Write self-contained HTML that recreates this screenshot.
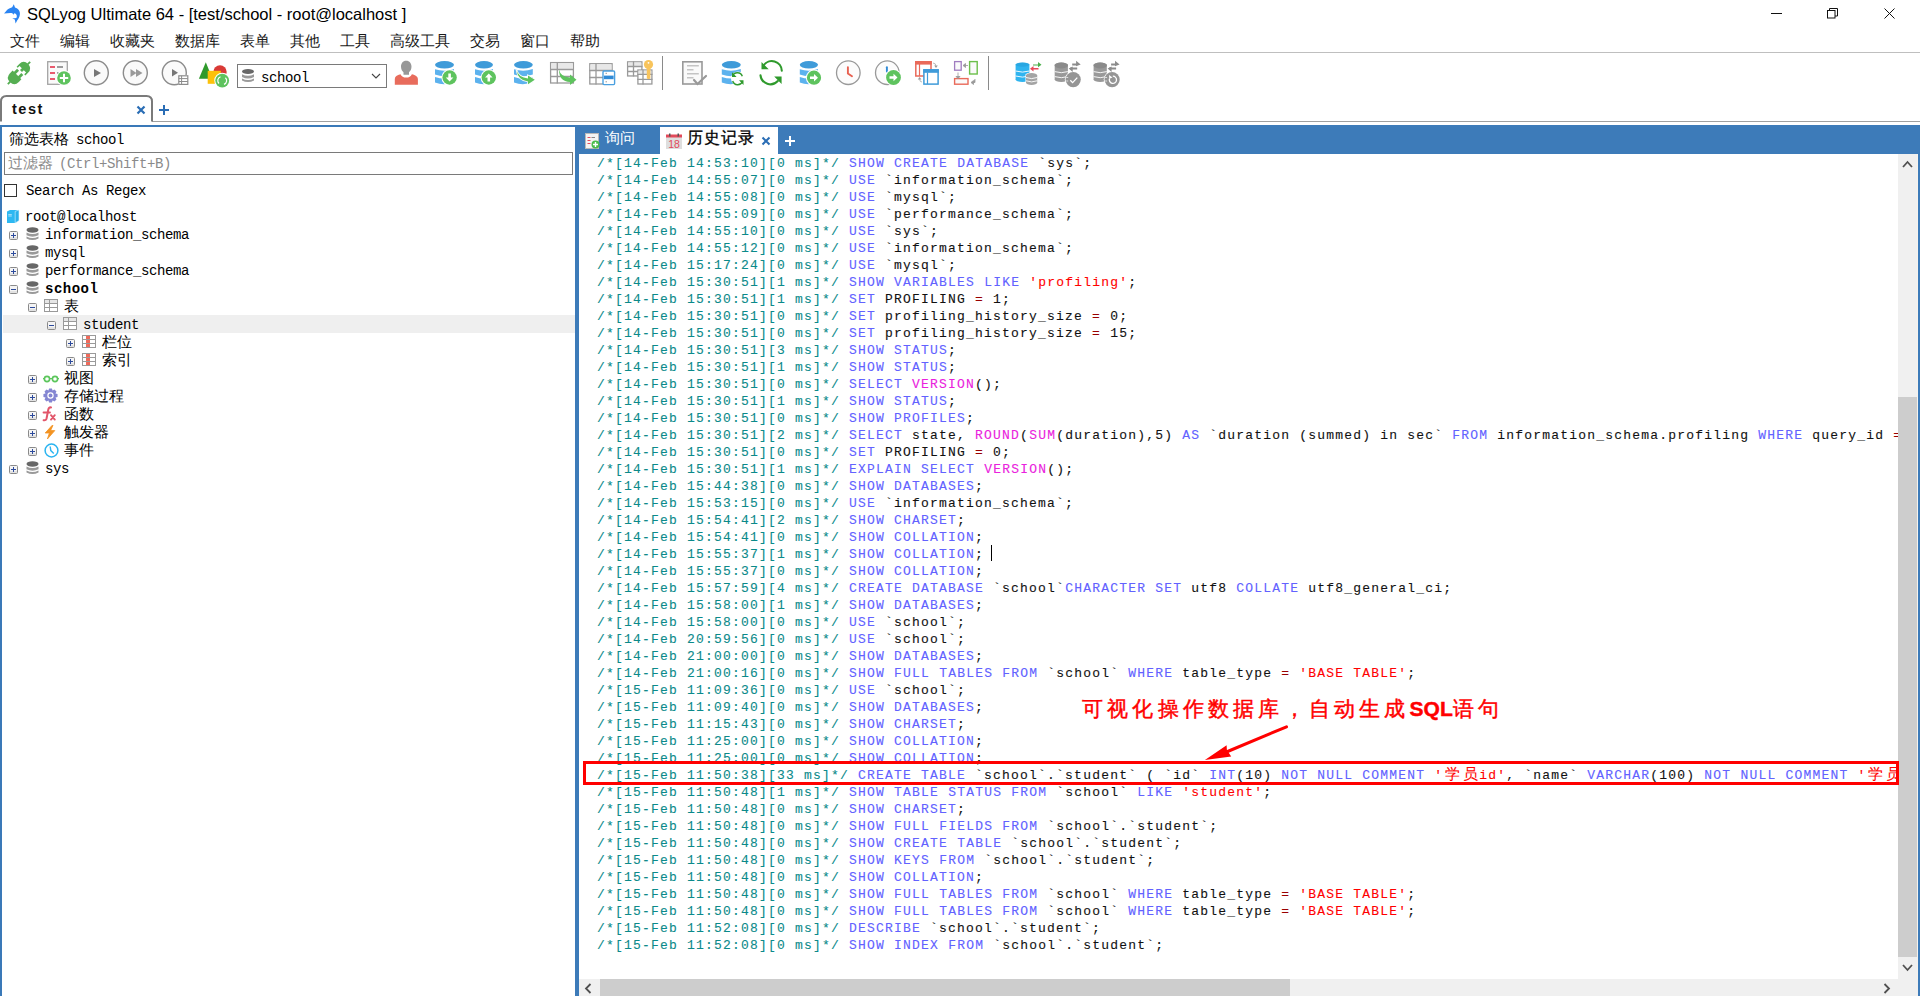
<!DOCTYPE html>
<html><head><meta charset="utf-8"><style>
*{margin:0;padding:0;box-sizing:border-box}
html,body{width:1920px;height:996px;overflow:hidden;background:#fff;font-family:"Liberation Sans",sans-serif;color:#000}
.a{position:absolute}
#title{position:absolute;left:27px;top:3px;font-size:16.5px;line-height:22px;white-space:pre;color:#000}
.mi{position:absolute;top:31px;font-size:15px;line-height:20px;color:#1a1a1a}
#code{position:absolute;left:597px;top:154px;font-family:"Liberation Mono",monospace;font-size:13px;letter-spacing:1.2px;line-height:17px;white-space:pre;color:#111;-webkit-text-stroke:0.1px}
#code b{font-weight:normal}
#code .c{color:#0b8a8a}
#code .k{color:#6262ff}
#code .f{color:#ea22dd}
#code .s{color:#f00}
#code .o{color:#900}
#code i.w{font-style:normal;display:inline-block;width:18px;text-align:center;font-size:15px;letter-spacing:0;line-height:10px}
.mono{font-family:"Liberation Mono",monospace}
.tt{position:absolute;font-family:"Liberation Mono",monospace;font-size:14px;line-height:18px;letter-spacing:-0.4px;white-space:pre;color:#000}
.tcj{position:absolute;font-size:15px;line-height:20px;white-space:pre;color:#000}
.tm{font-family:"Liberation Mono",monospace;font-size:14px;letter-spacing:-0.4px}
</style></head><body>
<!-- title bar -->
<div id="title">SQLyog Ultimate 64 - [test/school - root@localhost ]</div>
<span class="mi" style="left:10px">文件</span><span class="mi" style="left:60px">编辑</span><span class="mi" style="left:110px">收藏夹</span><span class="mi" style="left:175px">数据库</span><span class="mi" style="left:240px">表单</span><span class="mi" style="left:290px">其他</span><span class="mi" style="left:340px">工具</span><span class="mi" style="left:390px">高级工具</span><span class="mi" style="left:470px">交易</span><span class="mi" style="left:520px">窗口</span><span class="mi" style="left:570px">帮助</span>
<div class="a" style="left:0;top:52px;width:1920px;height:1px;background:#bfbfbf"></div>
<svg class="a" style="left:3px;top:57px" width="32" height="32" viewBox="3 57 32 32"><g transform="rotate(45 19 73)" fill="#55ae52"><path d="M12.8 75.8 H25.2 V79.5 Q25.2 85.8 19 85.8 Q12.8 85.8 12.8 79.5Z"/><rect x="14.6" y="71.3" width="2.8" height="5"/><rect x="20.6" y="71.3" width="2.8" height="5"/><rect x="18.1" y="85" width="1.8" height="3.8"/><path d="M12.8 70.2 H14.4 V67.6 H17.6 V70.2 H20.4 V67.6 H23.6 V70.2 H25.2 V66.4 Q25.2 60.2 19 60.2 Q12.8 60.2 12.8 66.4Z"/><rect x="18.1" y="57.2" width="1.8" height="3.6"/></g></svg>
<svg class="a" style="left:45px;top:59px" width="28" height="28" viewBox="45 59 28 28"><rect x="47.7" y="61.7" width="19.6" height="22.6" fill="#fafafa" stroke="#a4a4a4" stroke-width="1.3"/><path d="M50 67H55M50 73H55M50 79H55" stroke="#e85a6e" stroke-width="2"/><path d="M57 67H63M57 73H62" stroke="#9c9c9c" stroke-width="2"/><circle cx="64" cy="78" r="7.8" fill="#fff"/><circle cx="64" cy="78" r="6.8" fill="#5ec35e"/><path d="M64 73.8 V82.2 M59.8 78 H68.2" stroke="#fff" stroke-width="2"/></svg>
<svg class="a" style="left:81px;top:58px" width="32" height="32" viewBox="81 58 32 32"><circle cx="96.3" cy="72.7" r="12" fill="#fafafa" stroke="#8c8c8c" stroke-width="1.4"/><path d="M94 69 L101 73 L94 77Z" fill="#777"/></svg>
<svg class="a" style="left:120px;top:58px" width="32" height="32" viewBox="120 58 32 32"><circle cx="135.3" cy="72.7" r="12" fill="#fafafa" stroke="#8c8c8c" stroke-width="1.4"/><path d="M130.5 69 L136.5 73 L130.5 77Z M136 69 L142.5 73 L136 77Z" fill="#9a9a9a"/></svg>
<svg class="a" style="left:159px;top:58px" width="32" height="32" viewBox="159 58 32 32"><circle cx="174.3" cy="72.7" r="12" fill="#fafafa" stroke="#8c8c8c" stroke-width="1.4"/><path d="M172 69 L178 72.8 L172 76.5Z" fill="#777"/><rect x="178" y="75" width="10.5" height="10" fill="#fff"/><rect x="178.8" y="75.8" width="9" height="8.6" fill="#fff" stroke="#8c8c8c" stroke-width="1.2"/><path d="M181.6 75.8V84.4M178.8 78.6H187.8M178.8 81.5H187.8" stroke="#8c8c8c" stroke-width="1"/></svg>
<svg class="a" style="left:197px;top:59px" width="34" height="30" viewBox="197 59 34 30"><path d="M205.8 62.3 L212.5 78.8 H198.9Z" fill="#2f9a2c"/><circle cx="220" cy="72" r="6.7" fill="#d93a36"/><rect x="207.7" y="70.8" width="13.1" height="13" fill="#fcc10a"/><circle cx="222.2" cy="80.6" r="7.9" fill="#fff"/><circle cx="222.2" cy="80.6" r="6.9" fill="#5ec35e"/><path d="M219 83.5 A4 4 0 0 1 220.5 76.8 M225.4 77.7 A4 4 0 0 1 224 84.4" stroke="#fff" stroke-width="1.2" fill="none"/></svg>
<div class="a" style="left:237px;top:64px;width:150px;height:24px;border:1px solid #7a7a7a;background:#fff"></div>
<svg class="a" style="left:241px;top:68px" width="15" height="16" viewBox="241 68 15 16"><ellipse cx="248" cy="71.5" rx="6" ry="2.6" fill="#676767"/><path d="M242 74.2 Q248 77.2 254 74.2 V77 Q248 80 242 77Z" fill="#9a9a9a"/><path d="M242 78.4 Q248 81.4 254 78.4 V80.4 Q248 83.4 242 80.4Z" fill="#9a9a9a"/></svg>
<div class="tt" style="left:261px;top:69px">school</div>
<svg class="a" style="left:370px;top:72px" width="12" height="8" viewBox="370 72 12 8"><path d="M372 74 L376 78 L380 74" fill="none" stroke="#444" stroke-width="1.1"/></svg>
<svg class="a" style="left:393px;top:59px" width="28" height="28" viewBox="393 59 28 28"><path d="M406.2 60.8 C402.8 60.8 401 63.5 401 66.8 C401 69.5 402.3 71.3 403.5 72.3 V74.8 H409 V72.3 C410.2 71.3 411.5 69.5 411.5 66.8 C411.5 63.5 409.6 60.8 406.2 60.8Z" fill="#989898"/><path d="M394.8 84.8 V79 C394.8 76.5 397 75 400.5 74.2 C401.5 76.5 403.5 77.6 406.2 77.6 C408.9 77.6 410.9 76.5 411.9 74.2 C415.4 75 417.9 76.5 417.9 79 V84.8Z" fill="#e86c5c"/></svg>
<svg class="a" style="left:433px;top:59px" width="28" height="28" viewBox="433 59 28 28"><ellipse cx="444.5" cy="64.8" rx="9.5" ry="3.7" fill="#3f9bd9"/><path d="M435 69.2 Q444.5 72.2 454 69 V74.6 Q444.5 78 435 74.6Z" fill="#5cb2ee"/><path d="M435 77 Q444.5 80.2 454 77 V82 Q444.5 86 435 82.5Z" fill="#5cb2ee"/><circle cx="449.6" cy="77.5" r="8.2" fill="#fff"/><circle cx="449.6" cy="77.5" r="7.2" fill="#5ec35e"/><path d="M448.3 73.5 H450.90000000000003 V77.5 H453.40000000000003 L449.6 81.5 L445.8 77.5 H448.3Z" fill="#fff"/></svg>
<svg class="a" style="left:472px;top:59px" width="28" height="28" viewBox="472 59 28 28"><ellipse cx="484.0" cy="64.8" rx="9.0" ry="3.7" fill="#3f9bd9"/><path d="M475 69.2 Q484.0 72.2 493 69 V74.6 Q484.0 78 475 74.6Z" fill="#5cb2ee"/><path d="M475 77 Q484.0 80.2 493 77 V82 Q484.0 86 475 82.5Z" fill="#5cb2ee"/><circle cx="488.8" cy="77.5" r="8.2" fill="#fff"/><circle cx="488.8" cy="77.5" r="7.2" fill="#5ec35e"/><path d="M487.5 81.5 H490.1 V77.5 H492.6 L488.8 73.5 L485.0 77.5 H487.5Z" fill="#fff"/></svg>
<svg class="a" style="left:512px;top:59px" width="28" height="28" viewBox="512 59 28 28"><ellipse cx="523.4" cy="64.8" rx="9.4" ry="3.7" fill="#3f9bd9"/><path d="M514 69.2 Q523.4 72.2 532.8 69 V74.6 Q523.4 78 514 74.6Z" fill="#5cb2ee"/><path d="M514 77 Q523.4 80.2 532.8 77 V82 Q523.4 86 514 82.5Z" fill="#5cb2ee"/><path d="M516.5 70 Q518.5 77.5 528 78.5 V75.5 L534.8 79.8 L528 84.2 V81.5 Q518 80.5 516.5 70Z" fill="#fff" stroke="#fff" stroke-width="1.6"/><path d="M516.5 70 Q518.5 77.5 528 78.5 V75.5 L534.8 79.8 L528 84.2 V81.5 Q518 80.5 516.5 70Z" fill="#5ec35e"/></svg>
<svg class="a" style="left:548px;top:59px" width="32" height="28" viewBox="548 59 32 28"><rect x="550.6" y="62.6" width="22.8" height="20.400000000000002" fill="#fff" stroke="#9a9a9a" stroke-width="1.3"/><rect x="551.2" y="63.2" width="21.6" height="6.3" fill="#e8e8e8"/><path d="M557.3 62V83.6 M550 69.5H574 M550 76.5H574" stroke="#9a9a9a" stroke-width="1.3"/><path d="M559 69.5 Q560.5 77 570 77.5 V74.5 L576.5 79.8 L570 85 V82 Q559 81.5 559 69.5Z" fill="#5ec35e"/></svg>
<svg class="a" style="left:587px;top:59px" width="30" height="28" viewBox="587 59 30 28"><rect x="589.8000000000001" y="63.7" width="22.3" height="20.3" fill="#fff" stroke="#9a9a9a" stroke-width="1.3"/><rect x="590.4000000000001" y="64.3" width="21.1" height="6.199999999999998" fill="#e8e8e8"/><path d="M596 63.1V84.6 M589.2 70.5H612.7 M589.2 77.5H612.7" stroke="#9a9a9a" stroke-width="1.3"/><rect x="603" y="71" width="11.6" height="13.6" rx="1" fill="#fff" stroke="#4aa0e0" stroke-width="1.4"/><rect x="604" y="75.6" width="9.6" height="3.6" fill="#2f8ad6"/><path d="M605.5 73.3H607M605.5 81.8H607" stroke="#999" stroke-width="1"/></svg>
<svg class="a" style="left:625px;top:58px" width="30" height="29" viewBox="625 58 30 29"><rect x="627.6" y="61.85" width="14.3" height="14.100000000000001" fill="#fff" stroke="#9a9a9a" stroke-width="1.3"/><rect x="628.2" y="62.45" width="13.1" height="4.05" fill="#e8e8e8"/><path d="M633.5 61.25V76.55 M627 66.5H642.5 M627 71.5H642.5" stroke="#9a9a9a" stroke-width="1.3"/><rect x="637.9" y="70.0" width="14.0" height="14.0" fill="#fff" stroke="#9a9a9a" stroke-width="1.3"/><rect x="638.5" y="70.60000000000001" width="12.799999999999999" height="3.6999999999999913" fill="#e8e8e8"/><path d="M643 69.4V84.60000000000001 M637.3 74.3H652.5 M637.3 79.4H652.5" stroke="#9a9a9a" stroke-width="1.3"/><circle cx="648.5" cy="64.6" r="4.6" fill="#f8c45c"/><rect x="646.8" y="67" width="3.6" height="12" rx="1.5" fill="#f8c45c"/><circle cx="648.5" cy="62.8" r="0.9" fill="#fff"/></svg>
<div class="a" style="left:662px;top:56px;width:1px;height:34px;background:#8a8a8a"></div>
<div class="a" style="left:988px;top:56px;width:1px;height:34px;background:#8a8a8a"></div>
<svg class="a" style="left:680px;top:59px" width="30" height="28" viewBox="680 59 30 28"><rect x="682.8" y="61.8" width="19.2" height="22.2" fill="#fafafa" stroke="#999" stroke-width="1.6"/><path d="M687 65.8H698.8M687 69.8H693.5M687 73.8H698.8M687 77.8H693.5" stroke="#c4c4c4" stroke-width="1.4"/><path d="M694 80 L697.5 84 L706 76" fill="none" stroke="#999" stroke-width="2.2" stroke-linecap="round"/></svg>
<svg class="a" style="left:720px;top:59px" width="28" height="28" viewBox="720 59 28 28"><ellipse cx="731.3" cy="64.8" rx="9.5" ry="3.7" fill="#3f9bd9"/><path d="M721.8 69.2 Q731.3 72.2 740.8 69 V74.6 Q731.3 78 721.8 74.6Z" fill="#5cb2ee"/><path d="M721.8 77 Q731.3 80.2 740.8 77 V82 Q731.3 86 721.8 82.5Z" fill="#5cb2ee"/><circle cx="738" cy="78.5" r="7" fill="#fff"/><path d="M732.5 76 A5.2 5.2 0 0 1 742.3 76.3 M742.5 81.5 A5.2 5.2 0 0 1 732.7 81" fill="none" stroke="#2f9a2c" stroke-width="1.4"/><path d="M732 72.3 V77 H736.6Z M743.5 85 V80.3 H739Z" fill="#2f9a2c"/></svg>
<svg class="a" style="left:758px;top:58px" width="28" height="30" viewBox="758 58 28 30"><path d="M763.5 65.5 A10 10 0 0 1 781.8 70.8 M760.5 75.3 A10 10 0 0 0 777.8 81" fill="none" stroke="#2f9a2c" stroke-width="2.1" stroke-linecap="round"/><path d="M761.5 62 L761.5 69.2 L768.7 69.2Z M781.6 84 L781.6 76.5 L774.2 76.5Z" fill="#2f9a2c"/></svg>
<svg class="a" style="left:798px;top:59px" width="28" height="28" viewBox="798 59 28 28"><ellipse cx="808.9" cy="64.8" rx="9.1" ry="3.7" fill="#3f9bd9"/><path d="M799.8 69.2 Q808.9 72.2 818.0 69 V74.6 Q808.9 78 799.8 74.6Z" fill="#5cb2ee"/><path d="M799.8 77 Q808.9 80.2 818.0 77 V82 Q808.9 86 799.8 82.5Z" fill="#5cb2ee"/><circle cx="814" cy="77.7" r="8.1" fill="#fff"/><circle cx="814" cy="77.7" r="7.1" fill="#5ec35e"/><path d="M810 76.4 V79.0 H814 V81.5 L818 77.7 L814 73.9 V76.4Z" fill="#fff"/></svg>
<svg class="a" style="left:834px;top:58px" width="30" height="30" viewBox="834 58 30 30"><circle cx="848.3" cy="72.7" r="11.8" fill="#fcfcfc" stroke="#999" stroke-width="1.3"/><path d="M847.9 67.3 V73.5 L852 76.2" fill="none" stroke="#e86050" stroke-width="1.9" stroke-linecap="round"/></svg>
<svg class="a" style="left:873px;top:58px" width="32" height="30" viewBox="873 58 32 30"><circle cx="887.3" cy="72.7" r="11.8" fill="#fcfcfc" stroke="#999" stroke-width="1.3"/><path d="M886.9 67.3 V71.5" stroke="#2f8ad6" stroke-width="1.9" stroke-linecap="round"/><circle cx="893.5" cy="77.5" r="8.4" fill="#fff"/><circle cx="893.5" cy="77.5" r="7.4" fill="#5ec35e"/><path d="M889.5 76.2 V78.8 H893.5 V81.3 L897.5 77.5 L893.5 73.7 V76.2Z" fill="#fff"/></svg>
<svg class="a" style="left:913px;top:59px" width="28" height="28" viewBox="913 59 28 28"><rect x="915.8" y="61.8" width="15.2" height="14.2" fill="#fff" stroke="#e96a5a" stroke-width="1.5"/><rect x="915" y="61" width="16.8" height="3.6" fill="#e96a5a"/><path d="M919.5 64V76" stroke="#e96a5a" stroke-width="1.2"/><rect x="923.9" y="69.9" width="14.2" height="14.2" fill="#fff" stroke="#3f9bd9" stroke-width="1.5"/><rect x="923.2" y="69.2" width="15.6" height="3.6" fill="#3f9bd9"/><path d="M927.5 72.5V84" stroke="#3f9bd9" stroke-width="1.2"/><path d="M933 63 Q936 63 936 66.5" fill="none" stroke="#aaa" stroke-width="0.8"/><path d="M934.2 65.6 H937.8 L936 68Z M917.8 79.5 H921.4 L919.6 77Z" fill="#999"/><path d="M919.6 79 Q919.6 82 922 82" fill="none" stroke="#aaa" stroke-width="0.8"/></svg>
<svg class="a" style="left:952px;top:59px" width="28" height="28" viewBox="952 59 28 28"><rect x="954.6" y="61.6" width="6.6" height="8.6" fill="#fafafa" stroke="#a07cc0" stroke-width="1.3"/><rect x="969.6" y="61.6" width="7.6" height="12.4" fill="#fafafa" stroke="#6cbf4a" stroke-width="1.4"/><rect x="954.6" y="78.6" width="13.4" height="5.6" fill="#fafafa" stroke="#e96a5a" stroke-width="1.4"/><path d="M963 65.5 L965.5 63.5 V67.5Z M963.5 65.5H968 M956 76.5 L958 78.5 L960 76.5Z M958 72.5V77 M971 82.5 L973.5 80.5 V84.5Z M973 82.5 H975 V79" fill="#999" stroke="#999" stroke-width="0.8"/></svg>
<svg class="a" style="left:1013px;top:59px" width="30" height="30" viewBox="1013 59 30 30"><rect x="1015.6" y="64.5" width="13.8" height="15.399999999999999" fill="#2fb4ef"/><ellipse cx="1022.5" cy="64.7" rx="6.9" ry="2.2" fill="#2fb4ef"/><ellipse cx="1022.5" cy="79.7" rx="6.9" ry="2.2" fill="#2fb4ef"/><path d="M1015.6 71 Q1022.5 73.2 1029.4 71" fill="none" stroke="#fff" stroke-width="0.9"/><path d="M1015.6 76 Q1022.5 78.2 1029.4 76" fill="none" stroke="#fff" stroke-width="0.9"/><ellipse cx="1022.5" cy="64.6" rx="6.9" ry="2.1" fill="#2199d6" opacity="0.5"/><rect x="1025.5" y="74.6" width="11.8" height="8.6" fill="#fff"/><ellipse cx="1031.4" cy="74.8" rx="5.9" ry="2.2" fill="#fff"/><ellipse cx="1031.4" cy="82.99999999999999" rx="5.9" ry="2.2" fill="#fff"/><rect x="1026" y="75" width="11.2" height="8" fill="#a4a4a4"/><ellipse cx="1031.6" cy="75.2" rx="5.6" ry="2.2" fill="#a4a4a4"/><ellipse cx="1031.6" cy="82.8" rx="5.6" ry="2.2" fill="#a4a4a4"/><path d="M1026 77.5 Q1031.6 79.7 1037.2 77.5" fill="none" stroke="#fff" stroke-width="0.9"/><path d="M1026 80.8 Q1031.6 83.0 1037.2 80.8" fill="none" stroke="#fff" stroke-width="0.9"/><path d="M1033 64.5 H1038 V62 L1041.5 64.8 L1038 67.3 V65.5 H1033Z" fill="#4cb04c"/><path d="M1038.5 68 H1033.5 V66 L1030 68.8 L1033.5 71.5 V69.5 H1038.5Z" fill="#e84a5a"/></svg>
<svg class="a" style="left:1052px;top:59px" width="32" height="30" viewBox="1052 59 32 30"><rect x="1054.7" y="64.5" width="13.2" height="15.399999999999999" fill="#999"/><ellipse cx="1061.3" cy="64.7" rx="6.6" ry="2.2" fill="#999"/><ellipse cx="1061.3" cy="79.7" rx="6.6" ry="2.2" fill="#999"/><path d="M1054.7 71.6 Q1061.3 73.8 1067.9 71.6" fill="none" stroke="#fff" stroke-width="0.9"/><path d="M1054.7 76.6 Q1061.3 78.8 1067.9 76.6" fill="none" stroke="#fff" stroke-width="0.9"/><ellipse cx="1061.3" cy="65.5" rx="6.6" ry="3" fill="#8a8a8a"/><circle cx="1073.2" cy="79.6" r="8.4" fill="#fff"/><circle cx="1073.2" cy="79.6" r="7.6" fill="#959595"/><path d="M1066.2 77.5H1068.2M1066.2 81H1068.2" stroke="#ddd" stroke-width="1"/><path d="M1072.2 64.6 H1077.2 M1070.2 68.4 H1077.2" stroke="#8c8c8c" stroke-width="2"/><path d="M1076.1000000000001 60.8 L1080.7 64.6 L1076.1000000000001 66.2Z M1068.7 68.4 L1072.7 66.6 L1072.7 72Z" fill="#8c8c8c"/><path d="M1070.3 80.2 L1072.6 82.6 L1077.3 77.6" fill="none" stroke="#fff" stroke-width="1.3"/></svg>
<svg class="a" style="left:1091px;top:59px" width="32" height="30" viewBox="1091 59 32 30"><rect x="1093.6" y="64.5" width="13.2" height="15.399999999999999" fill="#999"/><ellipse cx="1100.1999999999998" cy="64.7" rx="6.6" ry="2.2" fill="#999"/><ellipse cx="1100.1999999999998" cy="79.7" rx="6.6" ry="2.2" fill="#999"/><path d="M1093.6 71.6 Q1100.1999999999998 73.8 1106.8 71.6" fill="none" stroke="#fff" stroke-width="0.9"/><path d="M1093.6 76.6 Q1100.1999999999998 78.8 1106.8 76.6" fill="none" stroke="#fff" stroke-width="0.9"/><ellipse cx="1100.1999999999998" cy="65.5" rx="6.6" ry="3" fill="#8a8a8a"/><circle cx="1112.1" cy="79.6" r="8.4" fill="#fff"/><circle cx="1112.1" cy="79.6" r="7.6" fill="#959595"/><path d="M1105.1 77.5H1107.1M1105.1 81H1107.1" stroke="#ddd" stroke-width="1"/><path d="M1111.1 64.6 H1116.1 M1109.1 68.4 H1116.1" stroke="#8c8c8c" stroke-width="2"/><path d="M1115.0 60.8 L1119.6 64.6 L1115.0 66.2Z M1107.6 68.4 L1111.6 66.6 L1111.6 72Z" fill="#8c8c8c"/><path d="M1109.6 78.4 A3.6 3.6 0 1 0 1112.8 76.2" fill="none" stroke="#fff" stroke-width="1.3"/><path d="M1109 75 L1109.3 78.8 L1112.5 77.5Z" fill="#fff"/></svg>
<!-- doc tab strip -->
<div class="a" style="left:152px;top:121px;width:1768px;height:1px;background:#a0a0a0"></div>
<div class="a" style="left:0;top:125px;width:1920px;height:2px;background:#3a79b8"></div>
<!-- left panel -->
<div class="a" style="left:0;top:125px;width:2px;height:871px;background:#3a79b8"></div>
<div class="tcj" style="left:9px;top:129px">筛选表格<span class="tm" style="margin-left:7px">school</span></div>
<div class="a" style="left:4px;top:152px;width:569px;height:23px;border:1px solid #7a7a7a;background:#fff"></div>
<div class="tcj" style="left:8px;top:153px;color:#8a8a8a">过滤器<span class="tm" style="margin-left:6px;color:#8a8a8a">(Ctrl+Shift+B)</span></div>
<div class="a" style="left:4px;top:184px;width:13px;height:13px;border:1px solid #333;background:#fff"></div>
<div class="tt" style="left:26px;top:182px">Search As Regex</div>
<div class="a" style="left:3px;top:315px;width:572px;height:18px;background:#efefef"></div>
<svg class="a" style="left:7px;top:209px" width="13" height="15" viewBox="0 0 13 15"><path d="M0 2.5 L3 1 H12 V11.5 L8 14 H0Z" fill="#2db8f2"/><path d="M8.2 2.4 L12 1 V11.5 L8.2 14Z" fill="#2ab0ea" stroke="#dff4fd" stroke-width="0.6"/><rect x="1.3" y="5" width="3.5" height="1.6" fill="#9fdcf8"/><rect x="1.3" y="7.2" width="3.5" height="0.8" fill="#7fd0f5"/></svg>
<div class="tt" style="left:25px;top:208px;">root@localhost</div>
<svg class="a" style="left:9px;top:231px" width="9" height="9" viewBox="0 0 9 9"><defs></defs><rect x="0.5" y="0.5" width="8" height="8" rx="1" fill="#f4f4f4" stroke="#8a8a8a"/><rect x="1" y="6" width="7" height="2" fill="#e2e2e2"/><rect x="2" y="4" width="5" height="1" fill="#2c4a9c"/><rect x="4" y="2" width="1" height="5" fill="#2c4a9c"/></svg>
<svg class="a" style="left:26px;top:227px" width="13" height="14" viewBox="0 0 13 14"><ellipse cx="6.5" cy="3" rx="6" ry="2.7" fill="#676767"/><path d="M0.5 5.6 Q6.5 8.6 12.5 5.6 V8.3 Q6.5 11.2 0.5 8.3Z" fill="#9a9a9a"/><path d="M0.5 9.6 Q6.5 12.6 12.5 9.6 V11.6 Q6.5 14.6 0.5 11.6Z" fill="#9a9a9a"/></svg>
<div class="tt" style="left:45px;top:226px;">information_schema</div>
<svg class="a" style="left:9px;top:249px" width="9" height="9" viewBox="0 0 9 9"><defs></defs><rect x="0.5" y="0.5" width="8" height="8" rx="1" fill="#f4f4f4" stroke="#8a8a8a"/><rect x="1" y="6" width="7" height="2" fill="#e2e2e2"/><rect x="2" y="4" width="5" height="1" fill="#2c4a9c"/><rect x="4" y="2" width="1" height="5" fill="#2c4a9c"/></svg>
<svg class="a" style="left:26px;top:245px" width="13" height="14" viewBox="0 0 13 14"><ellipse cx="6.5" cy="3" rx="6" ry="2.7" fill="#676767"/><path d="M0.5 5.6 Q6.5 8.6 12.5 5.6 V8.3 Q6.5 11.2 0.5 8.3Z" fill="#9a9a9a"/><path d="M0.5 9.6 Q6.5 12.6 12.5 9.6 V11.6 Q6.5 14.6 0.5 11.6Z" fill="#9a9a9a"/></svg>
<div class="tt" style="left:45px;top:244px;">mysql</div>
<svg class="a" style="left:9px;top:267px" width="9" height="9" viewBox="0 0 9 9"><defs></defs><rect x="0.5" y="0.5" width="8" height="8" rx="1" fill="#f4f4f4" stroke="#8a8a8a"/><rect x="1" y="6" width="7" height="2" fill="#e2e2e2"/><rect x="2" y="4" width="5" height="1" fill="#2c4a9c"/><rect x="4" y="2" width="1" height="5" fill="#2c4a9c"/></svg>
<svg class="a" style="left:26px;top:263px" width="13" height="14" viewBox="0 0 13 14"><ellipse cx="6.5" cy="3" rx="6" ry="2.7" fill="#676767"/><path d="M0.5 5.6 Q6.5 8.6 12.5 5.6 V8.3 Q6.5 11.2 0.5 8.3Z" fill="#9a9a9a"/><path d="M0.5 9.6 Q6.5 12.6 12.5 9.6 V11.6 Q6.5 14.6 0.5 11.6Z" fill="#9a9a9a"/></svg>
<div class="tt" style="left:45px;top:262px;">performance_schema</div>
<svg class="a" style="left:9px;top:285px" width="9" height="9" viewBox="0 0 9 9"><defs></defs><rect x="0.5" y="0.5" width="8" height="8" rx="1" fill="#f4f4f4" stroke="#8a8a8a"/><rect x="1" y="6" width="7" height="2" fill="#e2e2e2"/><rect x="2" y="4" width="5" height="1" fill="#2c4a9c"/></svg>
<svg class="a" style="left:26px;top:281px" width="13" height="14" viewBox="0 0 13 14"><ellipse cx="6.5" cy="3" rx="6" ry="2.7" fill="#676767"/><path d="M0.5 5.6 Q6.5 8.6 12.5 5.6 V8.3 Q6.5 11.2 0.5 8.3Z" fill="#9a9a9a"/><path d="M0.5 9.6 Q6.5 12.6 12.5 9.6 V11.6 Q6.5 14.6 0.5 11.6Z" fill="#9a9a9a"/></svg>
<div class="tt" style="left:45px;top:280px;font-weight:bold;letter-spacing:0.5px;">school</div>
<svg class="a" style="left:9px;top:465px" width="9" height="9" viewBox="0 0 9 9"><defs></defs><rect x="0.5" y="0.5" width="8" height="8" rx="1" fill="#f4f4f4" stroke="#8a8a8a"/><rect x="1" y="6" width="7" height="2" fill="#e2e2e2"/><rect x="2" y="4" width="5" height="1" fill="#2c4a9c"/><rect x="4" y="2" width="1" height="5" fill="#2c4a9c"/></svg>
<svg class="a" style="left:26px;top:461px" width="13" height="14" viewBox="0 0 13 14"><ellipse cx="6.5" cy="3" rx="6" ry="2.7" fill="#676767"/><path d="M0.5 5.6 Q6.5 8.6 12.5 5.6 V8.3 Q6.5 11.2 0.5 8.3Z" fill="#9a9a9a"/><path d="M0.5 9.6 Q6.5 12.6 12.5 9.6 V11.6 Q6.5 14.6 0.5 11.6Z" fill="#9a9a9a"/></svg>
<div class="tt" style="left:45px;top:460px;">sys</div>
<svg class="a" style="left:28px;top:303px" width="9" height="9" viewBox="0 0 9 9"><defs></defs><rect x="0.5" y="0.5" width="8" height="8" rx="1" fill="#f4f4f4" stroke="#8a8a8a"/><rect x="1" y="6" width="7" height="2" fill="#e2e2e2"/><rect x="2" y="4" width="5" height="1" fill="#2c4a9c"/></svg>
<svg class="a" style="left:44px;top:299px" width="14" height="13" viewBox="0 0 14 13"><rect x="0.5" y="0.5" width="13" height="12" fill="#fff" stroke="#9a9a9a"/><rect x="1" y="1" width="12" height="3" fill="#e6e6e6"/><path d="M5.5 0.5V12.5M0.5 4.5H13.5M0.5 8.5H13.5" stroke="#9a9a9a" fill="none"/></svg>
<div class="tcj" style="left:64px;top:295.5px">表</div>
<svg class="a" style="left:47px;top:321px" width="9" height="9" viewBox="0 0 9 9"><defs></defs><rect x="0.5" y="0.5" width="8" height="8" rx="1" fill="#f4f4f4" stroke="#8a8a8a"/><rect x="1" y="6" width="7" height="2" fill="#e2e2e2"/><rect x="2" y="4" width="5" height="1" fill="#2c4a9c"/></svg>
<svg class="a" style="left:63px;top:317px" width="14" height="13" viewBox="0 0 14 13"><rect x="0.5" y="0.5" width="13" height="12" fill="#fff" stroke="#9a9a9a"/><rect x="1" y="1" width="12" height="3" fill="#e6e6e6"/><path d="M5.5 0.5V12.5M0.5 4.5H13.5M0.5 8.5H13.5" stroke="#9a9a9a" fill="none"/></svg>
<div class="tt" style="left:83px;top:316px;">student</div>
<svg class="a" style="left:66px;top:339px" width="9" height="9" viewBox="0 0 9 9"><defs></defs><rect x="0.5" y="0.5" width="8" height="8" rx="1" fill="#f4f4f4" stroke="#8a8a8a"/><rect x="1" y="6" width="7" height="2" fill="#e2e2e2"/><rect x="2" y="4" width="5" height="1" fill="#2c4a9c"/><rect x="4" y="2" width="1" height="5" fill="#2c4a9c"/></svg>
<svg class="a" style="left:82px;top:335px" width="14" height="13" viewBox="0 0 14 13"><rect x="0.5" y="0.5" width="13" height="12" fill="#fff" stroke="#9a9a9a"/><rect x="4" y="1" width="4" height="11" fill="#ef6a5a"/><path d="M0.5 4.5H13.5M0.5 8.5H13.5" stroke="#9a9a9a" fill="none"/></svg>
<div class="tcj" style="left:102px;top:331.5px">栏位</div>
<svg class="a" style="left:66px;top:357px" width="9" height="9" viewBox="0 0 9 9"><defs></defs><rect x="0.5" y="0.5" width="8" height="8" rx="1" fill="#f4f4f4" stroke="#8a8a8a"/><rect x="1" y="6" width="7" height="2" fill="#e2e2e2"/><rect x="2" y="4" width="5" height="1" fill="#2c4a9c"/><rect x="4" y="2" width="1" height="5" fill="#2c4a9c"/></svg>
<svg class="a" style="left:82px;top:353px" width="14" height="13" viewBox="0 0 14 13"><rect x="0.5" y="0.5" width="13" height="12" fill="#fff" stroke="#9a9a9a"/><rect x="4" y="1" width="4" height="11" fill="#ef6a5a"/><path d="M0.5 4.5H13.5M0.5 8.5H13.5" stroke="#9a9a9a" fill="none"/></svg>
<div class="tcj" style="left:102px;top:349.5px">索引</div>
<svg class="a" style="left:28px;top:375px" width="9" height="9" viewBox="0 0 9 9"><defs></defs><rect x="0.5" y="0.5" width="8" height="8" rx="1" fill="#f4f4f4" stroke="#8a8a8a"/><rect x="1" y="6" width="7" height="2" fill="#e2e2e2"/><rect x="2" y="4" width="5" height="1" fill="#2c4a9c"/><rect x="4" y="2" width="1" height="5" fill="#2c4a9c"/></svg>
<svg class="a" style="left:43px;top:375px" width="16" height="8" viewBox="0 0 16 8"><circle cx="4" cy="4" r="2.6" fill="none" stroke="#5cc65c" stroke-width="1.6"/><circle cx="12" cy="4" r="2.6" fill="none" stroke="#5cc65c" stroke-width="1.6"/><path d="M6.6 3.6H9.4M0 3.6H1.4M14.6 3.6H16" stroke="#5cc65c" stroke-width="1.4"/></svg>
<div class="tcj" style="left:64px;top:367.5px">视图</div>
<svg class="a" style="left:28px;top:393px" width="9" height="9" viewBox="0 0 9 9"><defs></defs><rect x="0.5" y="0.5" width="8" height="8" rx="1" fill="#f4f4f4" stroke="#8a8a8a"/><rect x="1" y="6" width="7" height="2" fill="#e2e2e2"/><rect x="2" y="4" width="5" height="1" fill="#2c4a9c"/><rect x="4" y="2" width="1" height="5" fill="#2c4a9c"/></svg>
<svg class="a" style="left:43px;top:388px" width="15" height="15" viewBox="0 0 15 15"><path d="M5.45 2.51 L6.07 0.44 L8.93 0.44 L9.55 2.51 L9.58 2.52 L11.48 1.50 L13.50 3.52 L12.48 5.42 L12.49 5.45 L14.56 6.07 L14.56 8.93 L12.49 9.55 L12.48 9.58 L13.50 11.48 L11.48 13.50 L9.58 12.48 L9.55 12.49 L8.93 14.56 L6.07 14.56 L5.45 12.49 L5.42 12.48 L3.52 13.50 L1.50 11.48 L2.52 9.58 L2.51 9.55 L0.44 8.93 L0.44 6.07 L2.51 5.45 L2.52 5.42 L1.50 3.52 L3.52 1.50 L5.42 2.52Z" fill="#8486d2"/><circle cx="7.5" cy="7.5" r="2.6" fill="none" stroke="#fff" stroke-width="1.2"/></svg>
<div class="tcj" style="left:64px;top:385.5px">存储过程</div>
<svg class="a" style="left:28px;top:411px" width="9" height="9" viewBox="0 0 9 9"><defs></defs><rect x="0.5" y="0.5" width="8" height="8" rx="1" fill="#f4f4f4" stroke="#8a8a8a"/><rect x="1" y="6" width="7" height="2" fill="#e2e2e2"/><rect x="2" y="4" width="5" height="1" fill="#2c4a9c"/><rect x="4" y="2" width="1" height="5" fill="#2c4a9c"/></svg>
<svg class="a" style="left:42px;top:406px" width="15" height="16" viewBox="0 0 15 16"><path d="M9 1.5 C7.6 1 6.6 2 6.2 4 L4.6 12.2 C4.2 14 3.2 14.6 1.6 14.2" fill="none" stroke="#e2566a" stroke-width="2" stroke-linecap="round"/><path d="M1.5 6.5H8" stroke="#e2566a" stroke-width="1.8" stroke-linecap="round"/><path d="M9 9.2 L12.8 13.6 M12.8 9.2 L9 13.6" stroke="#e2566a" stroke-width="1.9" stroke-linecap="round"/></svg>
<div class="tcj" style="left:64px;top:403.5px">函数</div>
<svg class="a" style="left:28px;top:429px" width="9" height="9" viewBox="0 0 9 9"><defs></defs><rect x="0.5" y="0.5" width="8" height="8" rx="1" fill="#f4f4f4" stroke="#8a8a8a"/><rect x="1" y="6" width="7" height="2" fill="#e2e2e2"/><rect x="2" y="4" width="5" height="1" fill="#2c4a9c"/><rect x="4" y="2" width="1" height="5" fill="#2c4a9c"/></svg>
<svg class="a" style="left:45px;top:425px" width="11" height="15" viewBox="0 0 11 15"><path d="M7.2 0.3 L0.2 8 H4.4 L2.4 14 L9.8 5.6 H5.6 L8 0.3Z" fill="#f39322" stroke="#f39322" stroke-width="0.8" stroke-linejoin="round"/></svg>
<div class="tcj" style="left:64px;top:421.5px">触发器</div>
<svg class="a" style="left:28px;top:447px" width="9" height="9" viewBox="0 0 9 9"><defs></defs><rect x="0.5" y="0.5" width="8" height="8" rx="1" fill="#f4f4f4" stroke="#8a8a8a"/><rect x="1" y="6" width="7" height="2" fill="#e2e2e2"/><rect x="2" y="4" width="5" height="1" fill="#2c4a9c"/><rect x="4" y="2" width="1" height="5" fill="#2c4a9c"/></svg>
<svg class="a" style="left:44px;top:443px" width="15" height="15" viewBox="0 0 15 15"><circle cx="7.5" cy="7.5" r="6.4" fill="none" stroke="#2bb4f0" stroke-width="1.5"/><path d="M6.2 3.5 L6.8 7.6 L9.8 10.4" fill="none" stroke="#2bb4f0" stroke-width="1.4"/></svg>
<div class="tcj" style="left:64px;top:439.5px">事件</div>
<!-- right panel -->
<div class="a" style="left:575px;top:125px;width:1345px;height:29px;background:#3d7bb9"></div>
<div class="a" style="left:575px;top:125px;width:4px;height:871px;background:#3d7bb9"></div>
<div class="a" style="left:1918px;top:125px;width:2px;height:871px;background:#3d7bb9"></div>
<div class="a" style="left:660px;top:127px;width:118px;height:27px;background:#fff"></div>
<div class="a" style="left:579px;top:154px;width:1319px;height:825px;overflow:hidden">
<div id="code" style="left:18px;top:1px"><b class="c">/*[14-Feb 14:53:10][0 ms]*/</b> <b class="k">SHOW</b> <b class="k">CREATE</b> <b class="k">DATABASE</b> `sys`;
<b class="c">/*[14-Feb 14:55:07][0 ms]*/</b> <b class="k">USE</b> `information_schema`;
<b class="c">/*[14-Feb 14:55:08][0 ms]*/</b> <b class="k">USE</b> `mysql`;
<b class="c">/*[14-Feb 14:55:09][0 ms]*/</b> <b class="k">USE</b> `performance_schema`;
<b class="c">/*[14-Feb 14:55:10][0 ms]*/</b> <b class="k">USE</b> `sys`;
<b class="c">/*[14-Feb 14:55:12][0 ms]*/</b> <b class="k">USE</b> `information_schema`;
<b class="c">/*[14-Feb 15:17:24][0 ms]*/</b> <b class="k">USE</b> `mysql`;
<b class="c">/*[14-Feb 15:30:51][1 ms]*/</b> <b class="k">SHOW</b> <b class="k">VARIABLES</b> <b class="k">LIKE</b> <b class="s">'profiling'</b>;
<b class="c">/*[14-Feb 15:30:51][1 ms]*/</b> <b class="k">SET</b> PROFILING <b class="o">=</b> 1;
<b class="c">/*[14-Feb 15:30:51][0 ms]*/</b> <b class="k">SET</b> profiling_history_size <b class="o">=</b> 0;
<b class="c">/*[14-Feb 15:30:51][0 ms]*/</b> <b class="k">SET</b> profiling_history_size <b class="o">=</b> 15;
<b class="c">/*[14-Feb 15:30:51][3 ms]*/</b> <b class="k">SHOW</b> <b class="k">STATUS</b>;
<b class="c">/*[14-Feb 15:30:51][1 ms]*/</b> <b class="k">SHOW</b> <b class="k">STATUS</b>;
<b class="c">/*[14-Feb 15:30:51][0 ms]*/</b> <b class="k">SELECT</b> <b class="f">VERSION</b>();
<b class="c">/*[14-Feb 15:30:51][1 ms]*/</b> <b class="k">SHOW</b> <b class="k">STATUS</b>;
<b class="c">/*[14-Feb 15:30:51][0 ms]*/</b> <b class="k">SHOW</b> <b class="k">PROFILES</b>;
<b class="c">/*[14-Feb 15:30:51][2 ms]*/</b> <b class="k">SELECT</b> state, <b class="f">ROUND</b>(<b class="f">SUM</b>(duration),5) <b class="k">AS</b> `duration (summed) in sec` <b class="k">FROM</b> information_schema.profiling <b class="k">WHERE</b> query_id <b class="o">=</b> 1
<b class="c">/*[14-Feb 15:30:51][0 ms]*/</b> <b class="k">SET</b> PROFILING <b class="o">=</b> 0;
<b class="c">/*[14-Feb 15:30:51][1 ms]*/</b> <b class="k">EXPLAIN</b> <b class="k">SELECT</b> <b class="f">VERSION</b>();
<b class="c">/*[14-Feb 15:44:38][0 ms]*/</b> <b class="k">SHOW</b> <b class="k">DATABASES</b>;
<b class="c">/*[14-Feb 15:53:15][0 ms]*/</b> <b class="k">USE</b> `information_schema`;
<b class="c">/*[14-Feb 15:54:41][2 ms]*/</b> <b class="k">SHOW</b> <b class="k">CHARSET</b>;
<b class="c">/*[14-Feb 15:54:41][0 ms]*/</b> <b class="k">SHOW</b> <b class="k">COLLATION</b>;
<b class="c">/*[14-Feb 15:55:37][1 ms]*/</b> <b class="k">SHOW</b> <b class="k">COLLATION</b>;
<b class="c">/*[14-Feb 15:55:37][0 ms]*/</b> <b class="k">SHOW</b> <b class="k">COLLATION</b>;
<b class="c">/*[14-Feb 15:57:59][4 ms]*/</b> <b class="k">CREATE</b> <b class="k">DATABASE</b> `school`<b class="k">CHARACTER</b> <b class="k">SET</b> utf8 <b class="k">COLLATE</b> utf8_general_ci;
<b class="c">/*[14-Feb 15:58:00][1 ms]*/</b> <b class="k">SHOW</b> <b class="k">DATABASES</b>;
<b class="c">/*[14-Feb 15:58:00][0 ms]*/</b> <b class="k">USE</b> `school`;
<b class="c">/*[14-Feb 20:59:56][0 ms]*/</b> <b class="k">USE</b> `school`;
<b class="c">/*[14-Feb 21:00:00][0 ms]*/</b> <b class="k">SHOW</b> <b class="k">DATABASES</b>;
<b class="c">/*[14-Feb 21:00:16][0 ms]*/</b> <b class="k">SHOW</b> <b class="k">FULL</b> <b class="k">TABLES</b> <b class="k">FROM</b> `school` <b class="k">WHERE</b> table_type <b class="o">=</b> <b class="s">'BASE TABLE'</b>;
<b class="c">/*[15-Feb 11:09:36][0 ms]*/</b> <b class="k">USE</b> `school`;
<b class="c">/*[15-Feb 11:09:40][0 ms]*/</b> <b class="k">SHOW</b> <b class="k">DATABASES</b>;
<b class="c">/*[15-Feb 11:15:43][0 ms]*/</b> <b class="k">SHOW</b> <b class="k">CHARSET</b>;
<b class="c">/*[15-Feb 11:25:00][0 ms]*/</b> <b class="k">SHOW</b> <b class="k">COLLATION</b>;
<b class="c">/*[15-Feb 11:25:00][0 ms]*/</b> <b class="k">SHOW</b> <b class="k">COLLATION</b>;
<b class="c">/*[15-Feb 11:50:38][33 ms]*/</b> <b class="k">CREATE</b> <b class="k">TABLE</b> `school`.`student` ( `id` <b class="k">INT</b>(10) <b class="k">NOT</b> <b class="k">NULL</b> <b class="k">COMMENT</b> <b class="s">'<i class="w">学</i><i class="w">员</i>id'</b>, `name` <b class="k">VARCHAR</b>(100) <b class="k">NOT</b> <b class="k">NULL</b> <b class="k">COMMENT</b> <b class="s">'<i class="w">学</i><i class="w">员</i><i class="w">姓</i><i class="w">名</i>'</b>
<b class="c">/*[15-Feb 11:50:48][1 ms]*/</b> <b class="k">SHOW</b> <b class="k">TABLE</b> <b class="k">STATUS</b> <b class="k">FROM</b> `school` <b class="k">LIKE</b> <b class="s">'student'</b>;
<b class="c">/*[15-Feb 11:50:48][0 ms]*/</b> <b class="k">SHOW</b> <b class="k">CHARSET</b>;
<b class="c">/*[15-Feb 11:50:48][0 ms]*/</b> <b class="k">SHOW</b> <b class="k">FULL</b> <b class="k">FIELDS</b> <b class="k">FROM</b> `school`.`student`;
<b class="c">/*[15-Feb 11:50:48][0 ms]*/</b> <b class="k">SHOW</b> <b class="k">CREATE</b> <b class="k">TABLE</b> `school`.`student`;
<b class="c">/*[15-Feb 11:50:48][0 ms]*/</b> <b class="k">SHOW</b> <b class="k">KEYS</b> <b class="k">FROM</b> `school`.`student`;
<b class="c">/*[15-Feb 11:50:48][0 ms]*/</b> <b class="k">SHOW</b> <b class="k">COLLATION</b>;
<b class="c">/*[15-Feb 11:50:48][0 ms]*/</b> <b class="k">SHOW</b> <b class="k">FULL</b> <b class="k">TABLES</b> <b class="k">FROM</b> `school` <b class="k">WHERE</b> table_type <b class="o">=</b> <b class="s">'BASE TABLE'</b>;
<b class="c">/*[15-Feb 11:50:48][0 ms]*/</b> <b class="k">SHOW</b> <b class="k">FULL</b> <b class="k">TABLES</b> <b class="k">FROM</b> `school` <b class="k">WHERE</b> table_type <b class="o">=</b> <b class="s">'BASE TABLE'</b>;
<b class="c">/*[15-Feb 11:52:08][0 ms]*/</b> <b class="k">DESCRIBE</b> `school`.`student`;
<b class="c">/*[15-Feb 11:52:08][0 ms]*/</b> <b class="k">SHOW</b> <b class="k">INDEX</b> <b class="k">FROM</b> `school`.`student`;</div>
</div>
<svg class="a" style="left:0;top:0" width="24" height="26" viewBox="0 0 24 26"><path d="M4 13.6 C6 11.2 7.2 9.2 9.2 8.4 L12.2 7.2 L13.8 4.2 L15 7.6 C18.2 8.6 20.2 11.2 19.9 14.2 C19.6 17 18.4 19 17.3 20.3 L15.6 23.6 L14.8 19.6 L12.2 18.6 L16.4 17.9 C17.5 15.6 16.6 13.6 14.2 13.2 L13.4 14.8 L12.4 13.2 C10 12.6 7 13.4 4 13.6Z" fill="#2a84f2"/></svg>
<div class="a" style="left:1771px;top:13px;width:11px;height:1px;background:#111"></div>
<svg class="a" style="left:1827px;top:8px" width="11" height="11" viewBox="0 0 11 11"><rect x="0.5" y="2.5" width="7.5" height="7.5" fill="none" stroke="#111"/><path d="M2.5 2.5V0.5H10.5V8H8" fill="none" stroke="#111"/></svg>
<svg class="a" style="left:1884px;top:8px" width="11" height="11" viewBox="0 0 11 11"><path d="M0.5 0.5L10.5 10.5M10.5 0.5L0.5 10.5" stroke="#111" stroke-width="1"/></svg>
<svg class="a" style="left:0;top:95px" width="160" height="29" viewBox="0 0 160 29"><path d="M1 26.5 V6.5 Q1 1 6.5 1 H146.5 Q152 1 152 6.5 V26.5" fill="#fff" stroke="#7a7a7a" stroke-width="2"/></svg>
<div class="a" style="left:12px;top:99px;font-size:14.5px;letter-spacing:1.5px;font-weight:bold;line-height:20px;color:#111">test</div>
<svg class="a" style="left:136px;top:105px" width="10" height="10" viewBox="0 0 10 10"><path d="M1.5 1.5L8.5 8.5M8.5 1.5L1.5 8.5" stroke="#2a6db5" stroke-width="2.2"/></svg>
<svg class="a" style="left:158px;top:104px" width="12" height="12" viewBox="0 0 12 12"><path d="M6 1V11M1 6H11" stroke="#2a6db5" stroke-width="2"/></svg>
<svg class="a" style="left:585px;top:133px" width="15" height="16" viewBox="0 0 15 16"><rect x="0.5" y="0.5" width="13" height="15" fill="#f4f4f4" stroke="#b8b8b8"/><path d="M2.5 4.5H5.5M2.5 7.5H5.5M2.5 10.5H5.5" stroke="#e84a5a" stroke-width="1"/><path d="M6.5 4.5H10" stroke="#888" stroke-width="1"/><circle cx="10.5" cy="11.5" r="4" fill="#4cbb4c"/><path d="M10.5 9V14M8 11.5H13" stroke="#fff" stroke-width="1.4"/></svg>
<div class="a" style="left:605px;top:128px;font-size:15px;line-height:20px;color:#fff">询问</div>
<svg class="a" style="left:666px;top:133px" width="17" height="16" viewBox="0 0 17 16"><rect x="0" y="3" width="16" height="13" fill="#dedede"/><rect x="0" y="1.5" width="16" height="3" fill="#e24a5a"/><rect x="3" y="0.5" width="1.5" height="3" fill="#555"/><rect x="11.5" y="0.5" width="1.5" height="3" fill="#555"/><text x="8" y="14.6" text-anchor="middle" font-family="Liberation Sans" font-size="10.5" fill="#e24a5a">18</text></svg>
<div class="a" style="left:687px;top:128px;font-size:16px;line-height:20px;color:#000;letter-spacing:1px;-webkit-text-stroke:0.3px #000">历史记录</div>
<svg class="a" style="left:761px;top:136px" width="10" height="10" viewBox="0 0 10 10"><path d="M1.5 1.5L8.5 8.5M8.5 1.5L1.5 8.5" stroke="#2a6db5" stroke-width="2"/></svg>
<svg class="a" style="left:784px;top:135px" width="12" height="12" viewBox="0 0 12 12"><path d="M6 1V11M1 6H11" stroke="#fff" stroke-width="2"/></svg>
<div class="a" style="left:1898px;top:154px;width:19px;height:825px;background:#f0f0f0"></div>
<div class="a" style="left:1917px;top:154px;width:1px;height:842px;background:#f6f3ee"></div>
<div class="a" style="left:1898px;top:397px;width:19px;height:560px;background:#cdcdcd"></div>
<svg class="a" style="left:1902px;top:159px" width="11" height="11" viewBox="0 0 11 11"><path d="M1 8L5.5 3L10 8" fill="none" stroke="#505050" stroke-width="1.8"/></svg>
<svg class="a" style="left:1902px;top:962px" width="11" height="11" viewBox="0 0 11 11"><path d="M1 3L5.5 8L10 3" fill="none" stroke="#505050" stroke-width="1.8"/></svg>
<div class="a" style="left:579px;top:979px;width:1339px;height:17px;background:#f0f0f0"></div>
<div class="a" style="left:600px;top:979px;width:690px;height:17px;background:#cdcdcd"></div>
<svg class="a" style="left:583px;top:983px" width="11" height="11" viewBox="0 0 11 11"><path d="M7.5 1L3 5.5L7.5 10" fill="none" stroke="#505050" stroke-width="1.8"/></svg>
<svg class="a" style="left:1881px;top:983px" width="11" height="11" viewBox="0 0 11 11"><path d="M3.5 1L8 5.5L3.5 10" fill="none" stroke="#505050" stroke-width="1.8"/></svg>
<div class="a" style="left:991px;top:545px;width:1px;height:16px;background:#000"></div>
<div class="a" style="left:1082px;top:695px;font-size:21px;line-height:28px;color:#f00;letter-spacing:4.2px;white-space:pre;-webkit-text-stroke:0.45px #f00">可视化操作数据库，自动生成<b style="letter-spacing:0">SQL</b>语句</div>
<svg class="a" style="left:1195px;top:720px" width="100" height="45" viewBox="1195 720 100 45"><path d="M1286.5 726.8 L1224 753" stroke="#f00" stroke-width="3" stroke-linecap="round"/><path d="M1204.9 759.9 L1226.6 745.2 L1226.9 750 L1231.2 756.5Z" fill="#f00"/></svg>
<!-- red box -->
<div class="a" style="left:583px;top:761px;width:1316px;height:24px;border:3px solid #f00"></div>
</body></html>
